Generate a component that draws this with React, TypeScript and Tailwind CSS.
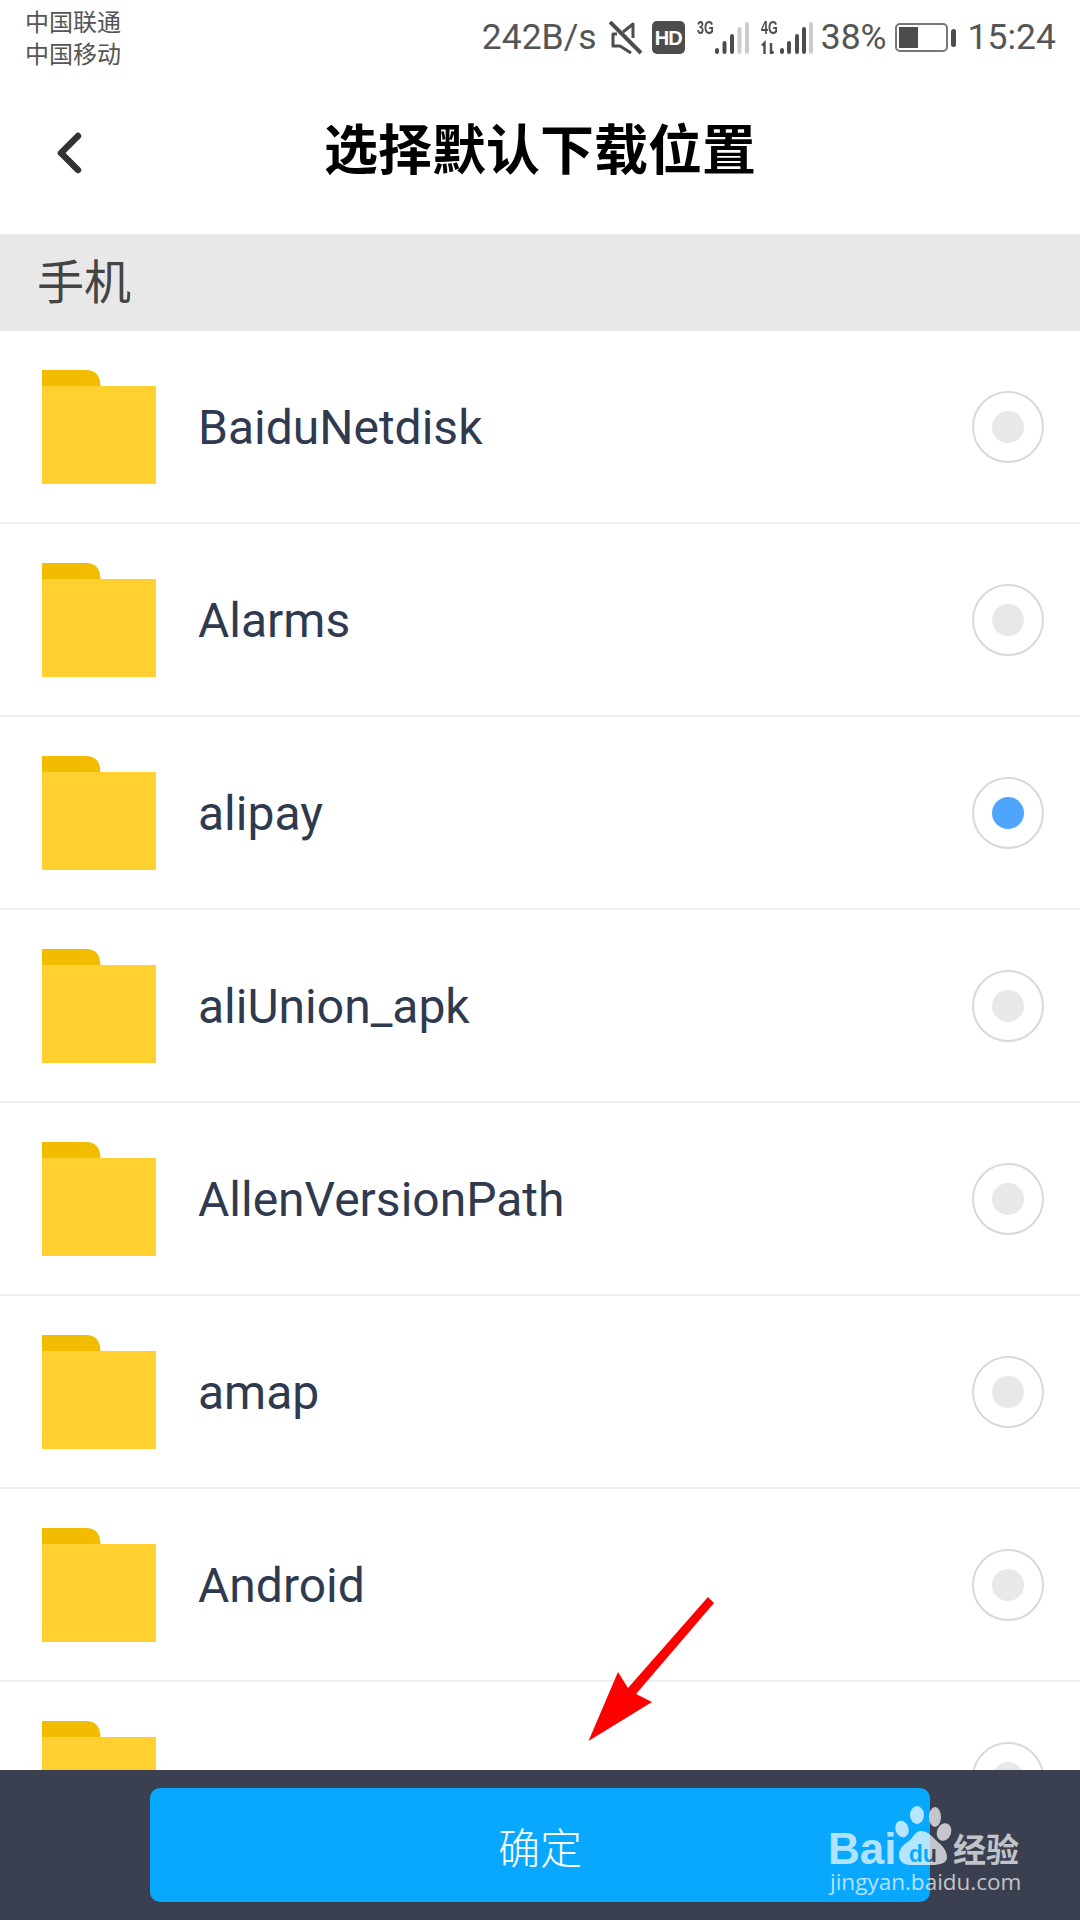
const folders = ['BaiduNetdisk', 'Alarms', 'alipay', 'aliUnion_apk', 'AllenVersionPath', 'amap', 'Android', '']

function Folder() {
  return (
    <svg width="114" height="114" viewBox="0 0 114 114" className="shrink-0" aria-hidden="true">
      <path d="M0 0H44Q58 0 58.500 16H0Z" fill="#f2bc00" />
      <rect x="0" y="16" width="114" height="98" fill="#ffd02f" />
    </svg>
  )
}

function Radio({ checked }: { checked: boolean }) {
  return (
    <div className="flex h-[72px] w-[72px] shrink-0 items-center justify-center rounded-full border-2 border-[#d9d9d9] bg-white">
      <div className={checked ? 'h-8 w-8 rounded-full bg-[#4fa5fb]' : 'h-8 w-8 rounded-full bg-[#e8e8e8]'} />
    </div>
  )
}

function Row({ name, checked }: { name: string; checked: boolean }) {
  return (
    <div className="flex h-[193px] shrink-0 items-center border-b-2 border-[#efefef] pl-[42px] pr-[36px]">
      <Folder />
      <span className="ml-[42px] flex-1 pt-[2px] text-[48px] leading-none text-[#303a4f]">{name}</span>
      <Radio checked={checked} />
    </div>
  )
}

function Signal({ label, full, arrows, className }: { label: string; full: number; arrows?: boolean; className: string }) {
  const bars = arrows
    ? [
        { x: 19, h: 6 },
        { x: 26, h: 13 },
        { x: 34, h: 20 },
        { x: 41, h: 27 },
        { x: 48, h: 32 },
      ]
    : [
        { x: 18, h: 6 },
        { x: 25.500, h: 13 },
        { x: 33, h: 20 },
        { x: 40.500, h: 27 },
        { x: 48, h: 32 },
      ]
  return (
    <div className={`relative h-[33px] w-[52px] ${className}`}>
      <span className="absolute top-[-2px] left-0 origin-left scale-x-[0.7] font-['Liberation_Sans',sans-serif] text-[18px] leading-none font-bold text-[#4d4d4d]">
        {label}
      </span>
      <svg width="52" height="33" viewBox="0 0 52 33" aria-hidden="true">
        {arrows && <path d="M3.500 33V22L1 24.500M10 22V33L12.500 30.500" fill="none" stroke="#4d4d4d" strokeWidth="2.400" />}
        {bars.map((b, i) => (
          <rect key={b.x} x={b.x} y={33 - b.h} width="4" height={b.h} rx="2" fill={i < full ? '#4d4d4d' : '#cccccc'} />
        ))}
      </svg>
    </div>
  )
}

function Battery() {
  return (
    <div className="ml-[8px] flex items-center">
      <div className="h-[29px] w-[53px] rounded-[5px] border-2 border-[#777777] p-[2px]">
        <div className="h-[21px] w-[19px] bg-[#4d4d4d]" />
      </div>
      <div className="ml-[3px] h-[18px] w-[5px] rounded-full bg-[#4d4d4d]" />
    </div>
  )
}

function Watermark() {
  return (
    <div className="absolute top-[1805px] left-[830px] h-[92px] w-[192px] text-white/70">
      <svg width="62" height="62" viewBox="0 0 62 62" className="absolute top-0 left-[61px]" fill="#ffffff" fillOpacity="0.7" aria-hidden="true">
        <ellipse cx="11" cy="24" rx="6.500" ry="8.500" transform="rotate(-20 11 24)" />
        <ellipse cx="26" cy="10" rx="7" ry="9" />
        <ellipse cx="44" cy="12" rx="6" ry="10" />
        <ellipse cx="53" cy="27" rx="7" ry="9" transform="rotate(20 53 27)" />
        <path d="M30 26C38 26 42 33 48 38C54 43 56 48 56 52C56 58 50 60 40 60H20C12 60 8 56 8 50C8 44 12 40 18 36C22 33 24 26 30 26Z" />
      </svg>
      <span className="absolute top-[26px] left-[-2px] font-['Liberation_Sans',sans-serif] text-[44px] leading-[36px] font-bold">Bai</span>
      <span className="absolute top-[38px] left-[79px] bg-[linear-gradient(90deg,#08a8ff_21px,#3b4050_21px)] bg-clip-text font-['Liberation_Sans',sans-serif] text-[23px] leading-[23px] font-bold text-transparent">
        du
      </span>
      <span className="absolute top-[25px] left-[123px] font-['Noto_Sans_CJK_SC',sans-serif] text-[33px] leading-[36px] font-bold">经验</span>
      <span className="absolute top-[65px] left-0 font-['Open_Sans',sans-serif] text-[22.500px] leading-[24px] whitespace-nowrap">jingyan.baidu.com</span>
    </div>
  )
}

export default function App() {
  return (
    <div className="relative flex h-[1920px] w-[1080px] flex-col overflow-hidden bg-white font-['Roboto','Noto_Sans_CJK_SC',sans-serif]">
      <div className="flex h-[66px] shrink-0 items-start justify-between pl-[25px] pr-[24px] text-[#555555]">
        <div className="pt-[5px] font-['Noto_Sans_CJK_SC',sans-serif] text-[24px] leading-[32px]">
          <div>中国联通</div>
          <div>中国移动</div>
        </div>
        <div className="flex items-center pt-[20px] text-[35.500px] leading-none">
          <span>242B/s</span>
          <svg width="34" height="34" viewBox="0 0 34 34" className="ml-[12px]" fill="none" stroke="#4d4d4d" strokeLinejoin="round" aria-hidden="true">
            <path d="M24 17V3L14 11M8 13H4V25H11L22 32" strokeWidth="3" />
            <path d="M1 1L32 32" strokeWidth="4" />
          </svg>
          <div className="ml-[9px] flex h-[33px] w-[33px] items-center justify-center rounded-[5px] bg-[#4d4d4d] font-['Liberation_Sans',sans-serif] text-[20px] leading-none font-bold tracking-[-1px] text-white">
            HD
          </div>
          <Signal label="3G" full={3} className="ml-[12px]" />
          <Signal label="4G" full={4} arrows className="ml-[12px]" />
          <span className="ml-[8px]">38%</span>
          <Battery />
          <span className="ml-[12px]">15:24</span>
        </div>
      </div>

      <header className="relative flex h-[168px] shrink-0 items-center justify-center pb-[6px]">
        <svg width="26" height="44" viewBox="0 0 26 44" className="absolute top-[65px] left-[57px]" fill="none" stroke="#333333" strokeWidth="6.500" strokeLinecap="round" strokeLinejoin="round" aria-hidden="true">
          <path d="M21 5L4 22L21 39" />
        </svg>
        <h1 className="font-['Noto_Sans_CJK_SC',sans-serif] text-[54px] leading-none font-bold text-black">选择默认下载位置</h1>
      </header>

      <div className="flex h-[97px] shrink-0 items-center bg-[#e8e8e8] pb-[8px] pl-[37px] font-['Noto_Sans_CJK_SC',sans-serif] text-[47px] leading-none text-[#444444]">
        手机
      </div>

      <div className="flex min-h-0 flex-1 flex-col overflow-hidden">
        {folders.map((name, i) => (
          <Row key={i} name={name} checked={name === 'alipay'} />
        ))}
      </div>

      <div className="flex h-[150px] shrink-0 items-start justify-center bg-[#3b4050] pt-[18px]">
        <button className="flex h-[114px] w-[780px] items-center justify-center rounded-[10px] bg-[#08a8ff] font-['Noto_Sans_CJK_SC',sans-serif] text-[42px] font-light text-white">
          确定
        </button>
      </div>

      <svg width="140" height="160" viewBox="0 0 140 160" className="absolute top-[1590px] left-[580px]" aria-hidden="true">
        <path d="M128 7L134 13L56 104L72 112L8.500 151L38 82L48 98Z" fill="#ff0000" />
      </svg>

      <Watermark />
    </div>
  )
}
